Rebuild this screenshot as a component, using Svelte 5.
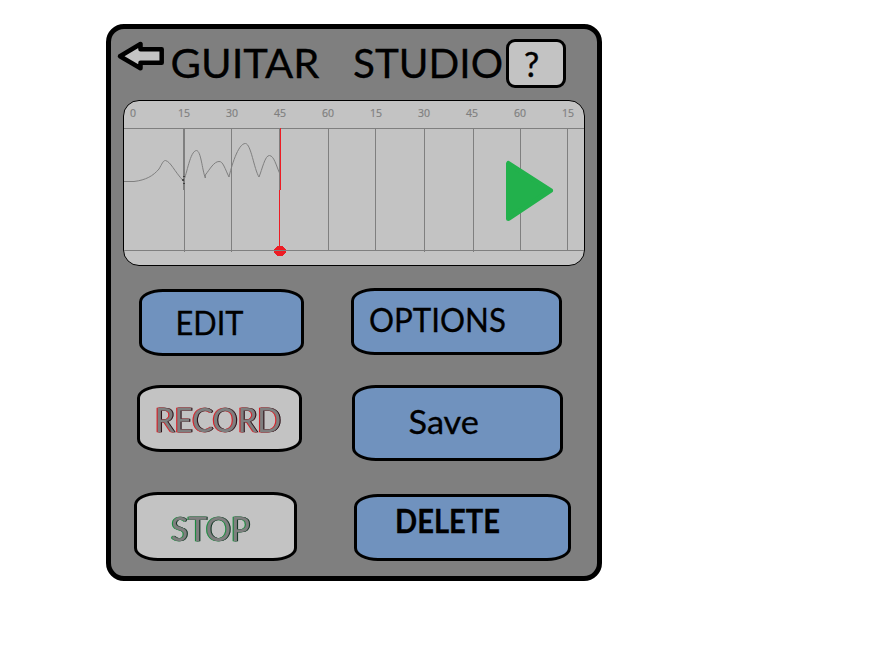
<script>
  const columns = [
    [
      { label: 'EDIT', w: 165, h: 67, left: 28, top: 0, x: 33.5, y: 42.5, length: 68 },
      { label: 'RECORD', w: 165, h: 67, left: 26, top: 29, x: 15, y: 43.5, length: 126, tone: 'record' },
      { label: 'STOP', w: 163, h: 69, left: 23, top: 40, x: 34, y: 45.5, length: 79, tone: 'stop' }
    ],
    [
      { label: 'OPTIONS', w: 211, h: 67, left: 0, top: -1, x: 15, y: 40.5, length: 137 },
      { label: 'Save', w: 211, h: 76, left: 1, top: 30, x: 53.5, y: 45.5, length: 70.5 },
      { label: 'DELETE', w: 217, h: 67, left: 3, top: 33, x: 38, y: 35.5, length: 105, bold: true }
    ]
  ];
  const ticks = [
    [133, '0'], [184, '15'], [232, '30'], [280, '45'], [328, '60'],
    [376, '15'], [424, '30'], [472, '45'], [520, '60'], [568, '15']
  ];
  const lines = [[184, 252], [231, 252], [328, 250], [375, 250], [424, 252], [473, 252], [520, 250], [567, 250]];
</script>

<main>
  <header>
    <svg class="back" width="50" height="36" viewBox="116 38 50 36" aria-label="Back">
      <path d="M120 56.2 140.5 44V49.3H161.7V62.8H140.5V68.2Z" />
    </svg>
    <svg class="title" width="340" height="50" viewBox="166 38 340 50">
      <text x="170.5" y="77.7" textLength="149" lengthAdjust="spacingAndGlyphs">GUITAR</text>
      <text x="353" y="77.7" textLength="150" lengthAdjust="spacingAndGlyphs">STUDIO</text>
    </svg>
    <button class="help" aria-label="Help">
      <svg width="54" height="43" viewBox="509 42 54 43"><text x="524" y="77">?</text></svg>
    </button>
  </header>

  <section class="track">
    <svg width="460" height="164" viewBox="124 101 460 164">
      {#each ticks as [x, label]}
        <text {x} y="117.3" text-anchor="middle">{label}</text>
      {/each}
      <g shape-rendering="crispEdges" fill="#7f7f7f">
        <rect x="124" y="128" width="460" height="1" />
        {#each lines as [x, end]}
          <rect {x} y="128" width="1" height={end - 128} />
        {/each}
        <rect x="183" y="128" width="2" height="62" />
        <rect x="279" y="128" width="1" height="62" />
        <rect x="280" y="128" width="1" height="62" fill="#ed1c24" />
        <rect x="279" y="190" width="1" height="56" fill="#ed1c24" />
        <ellipse cx="280" cy="251" rx="6" ry="5" fill="#ed1c24" />
        <rect x="124" y="250" width="460" height="1" />
      </g>
      <path class="wave" d="M124 181.5H134C146 180 153 176 159 169C162 164 163 160.5 165.5 160.5C171 162 174 171 183.5 181C187 174 190 151 196.5 150.5C201 151 202 169 205.3 178V175C210 169 214 161.5 219 161.5C223 161 225 169 229 177C231 168 238 143 245.5 143.5C251 144 254 169 259 177C262 170 265 155 269.5 155.5C274 156 276 165 279.5 173" />
      <path d="M183 179v2m1-5v1m0 6v1" stroke="#000" />
      <path class="play" d="M508.5 163.5V218.5L550.5 190.5Z" />
    </svg>
  </section>

  <section class="controls">
    {#each columns as column}
      <div class="column">
        {#each column as b}
          <button
            class="control {b.tone ?? ''}"
            class:bold={b.bold}
            aria-label={b.label}
            style="width:{b.w}px;height:{b.h}px;margin:{b.top}px 0 0 {b.left}px"
          >
            <svg width={b.w - 6} height={b.h - 6}>
              <text x={b.x} y={b.y} textLength={b.length} lengthAdjust="spacingAndGlyphs">{b.label}</text>
            </svg>
          </button>
        {/each}
      </div>
    {/each}
  </section>
</main>

<style>
  :global(body) {
    background: #fff;
  }
  main {
    box-sizing: border-box;
    width: 496px;
    height: 557px;
    margin: 24px 0 0 106px;
    border: 5px solid #000;
    border-radius: 18px;
    background: #7f7f7f;
    font-family: Lato, "Open Sans", sans-serif;
    display: flex;
    flex-direction: column;
  }
  :global(#app) {
    display: flow-root;
  }
  svg {
    display: block;
    flex: none;
  }
  button {
    box-sizing: border-box;
    flex: none;
    display: block;
    padding: 0;
    border: 3px solid #000;
    font-family: inherit;
  }
  header {
    display: flex;
    height: 71px;
    padding: 9px 0 0 5px;
    box-sizing: border-box;
  }
  .back path {
    fill: #c3c3c3;
    stroke: #000;
    stroke-width: 4.5;
    stroke-linejoin: round;
  }
  .title text {
    font-size: 41px;
    stroke: #000;
    stroke-width: 0.3;
  }
  .help {
    width: 60px;
    height: 49px;
    margin-top: 1px;
    border-radius: 9px;
    background: #c3c3c3;
  }
  .help text {
    font-size: 34px;
    stroke: #000;
    stroke-width: 0.4;
  }
  .track {
    box-sizing: border-box;
    width: 462px;
    height: 166px;
    margin-left: 12px;
    flex: none;
    overflow: hidden;
    border: 1px solid #000;
    border-radius: 16px;
    background: #c3c3c3;
  }
  .track text {
    font-family: "Open Sans", sans-serif;
    font-size: 10.5px;
    fill: #7f7f7f;
    stroke: #7f7f7f;
    stroke-width: 0.2;
  }
  .wave {
    fill: none;
    stroke: #7f7f7f;
    stroke-width: 1;
  }
  .play {
    fill: #22b14c;
    stroke: #22b14c;
    stroke-width: 5;
    stroke-linejoin: round;
  }
  .controls {
    display: flex;
    padding-top: 23px;
  }
  .column {
    width: 240px;
  }
  .control {
    border-radius: 24px / 13px;
    background: #7092be;
  }
  .control text {
    font-size: 32px;
    stroke: #000;
    stroke-width: 0.3;
  }
  .bold text {
    font-weight: 700;
  }
  .record,
  .stop {
    background: #c3c3c3;
  }
  .record text,
  .stop text {
    fill: #7f7f7f;
    stroke: #7f7f7f;
  }
  .record text {
    filter: drop-shadow(1px 0 0 #200008) drop-shadow(-1px 0 0 #e01018);
  }
  .stop text {
    filter: drop-shadow(1px 0 0 #042c18) drop-shadow(-1px 0 0 #0c8a34);
  }
</style>
